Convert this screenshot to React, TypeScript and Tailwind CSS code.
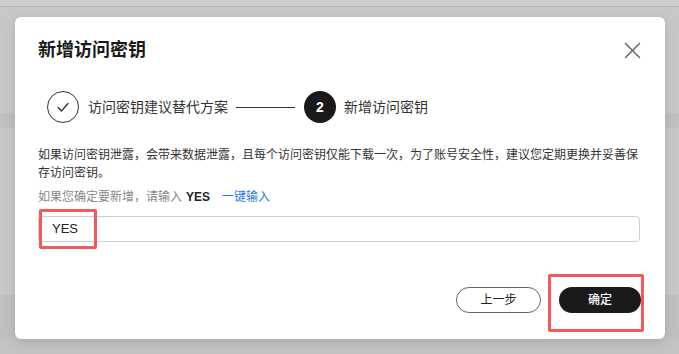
import React from 'react';

const FONT = { fontFamily: '"Liberation Sans", "Noto Sans CJK SC", sans-serif' };

const CheckIcon: React.FC = () => (
  <svg width="14" height="14" viewBox="0 0 14 14" fill="none">
    <polyline points="2,7.5 5.5,11 12,3.5" stroke="#333" strokeWidth="1.3" strokeLinecap="round" strokeLinejoin="round" />
  </svg>
);

const CloseIcon: React.FC = () => (
  <svg width="17" height="17" viewBox="0 0 17 17" fill="none">
    <path d="M1.5 1.5 L15.5 15.5 M15.5 1.5 L1.5 15.5" stroke="#666" strokeWidth="1.5" strokeLinecap="round" />
  </svg>
);

const App: React.FC = () => {
  return (
    <div className="relative w-[679px] h-[354px] overflow-hidden bg-[#c7c7c7] flex flex-col" style={FONT}>
      {/* page behind the overlay */}
      <div className="h-[6px] bg-[#cdcdcd]" />
      <div className="h-px bg-[#b4b4b4]" />
      <div className="h-[106px]" />
      <div className="h-[15px] bg-[#c0c0c0]" />
      <div className="h-[167px]" />
      <div className="h-[42px] bg-[#bfbfbf]" />
      <div className="flex-1 bg-[#c3c3c3]" />

      {/* modal */}
      <div className="absolute left-[15px] top-[17px] w-[650px] h-[322px] bg-white rounded-[6px] shadow-[0_4px_12px_rgba(0,0,0,0.12)] flex flex-col pl-[23px] pr-[24px] pt-[20px]">
        <div className="flex items-center justify-between h-[26px]">
          <h2 className="text-[18px] font-bold text-[#1a1a1a] leading-[26px]">新增访问密钥</h2>
          <button className="flex items-center justify-center w-[17px] h-[17px]">
            <CloseIcon />
          </button>
        </div>

        <div className="flex items-center mt-[28px] pl-[9px] h-[32px]">
          <div className="w-[32px] h-[32px] rounded-full border border-[#333] flex items-center justify-center">
            <CheckIcon />
          </div>
          <span className="ml-[9px] text-[14px] text-[#333]">访问密钥建议替代方案</span>
          <div className="ml-[8px] w-[59px] h-px bg-[#333]" />
          <div className="ml-[9px] w-[32px] h-[32px] rounded-full bg-[#1a1a1a] flex items-center justify-center text-white text-[14px] font-bold">
            2
          </div>
          <span className="ml-[8px] text-[14px] text-[#333]">新增访问密钥</span>
        </div>

        <p className="mt-[23px] text-[12px] leading-[18px] text-[#333] whitespace-nowrap">
          如果访问密钥泄露，会带来数据泄露，且每个访问密钥仅能下载一次，为了账号安全性，建议您定期更换并妥善保
          <br />
          存访问密钥。
        </p>

        <div className="mt-[6px] text-[12px] leading-[18px] text-[#888] flex items-center">
          <span>如果您确定要新增，请输入</span>
          <span className="ml-[4px] font-bold text-[#222]">YES</span>
          <a className="ml-[12px] text-[#1f7ae6]">一键输入</a>
        </div>

        <div className="mt-[10px] h-[26px] border border-[#cfcfcf] rounded-[4px] flex items-center pl-[13px] mr-[1px] text-[13px] text-[#222]">
          YES
        </div>

        <div className="mt-[45px] flex justify-end gap-[18px]">
          <button className="w-[85px] h-[26px] rounded-full border border-[#666] text-[12px] text-[#222]">
            上一步
          </button>
          <button className="w-[82px] h-[26px] rounded-full bg-[#1a1a1a] text-[12px] text-white font-medium">
            确定
          </button>
        </div>

        {/* annotation boxes */}
        <div className="absolute left-[24px] top-[192px] w-[58px] h-[40px] border-[3px] border-[#f45858] rounded-[2px]" />
        <div className="absolute left-[533px] top-[257px] w-[96px] h-[58px] border-[3px] border-[#f45858] rounded-[2px]" />
      </div>
    </div>
  );
};

export default App;
